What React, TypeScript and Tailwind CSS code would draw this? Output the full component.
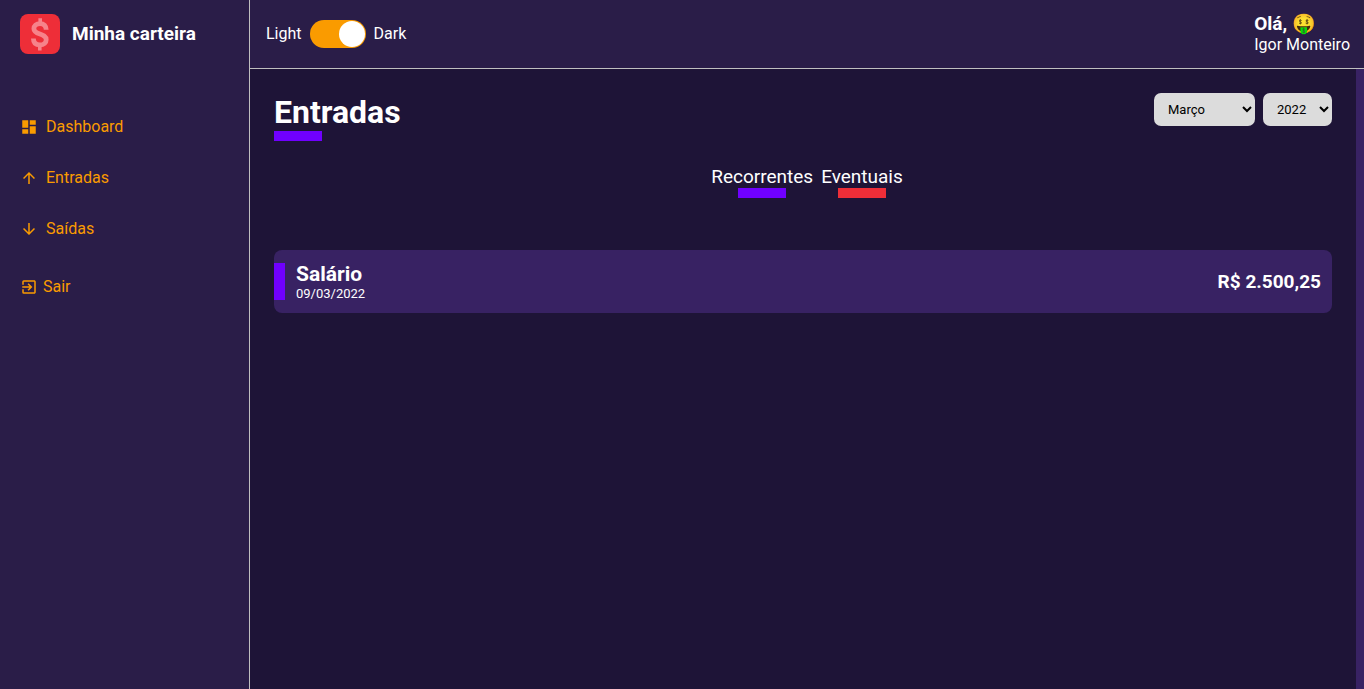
import { useState } from "react";
import { MdArrowDownward, MdArrowUpward, MdDashboard, MdExitToApp } from "react-icons/md";

const months = [
  "Janeiro", "Fevereiro", "Março", "Abril", "Maio", "Junho",
  "Julho", "Agosto", "Setembro", "Outubro", "Novembro", "Dezembro",
];

const links = [
  { label: "Dashboard", Icon: MdDashboard },
  { label: "Entradas", Icon: MdArrowUpward },
  { label: "Saídas", Icon: MdArrowDownward },
];

const entries = [{ title: "Salário", date: "09/03/2022", amount: "R$ 2.500,25" }];

function Logo() {
  return (
    <svg viewBox="0 0 40 40" className="size-10" aria-hidden="true">
      <rect width="40" height="40" rx="8" fill="#ee2e38" />
      <g fill="none" stroke="#f6838a">
        <path d="M20.200 4.200V8M19.800 32.500V36.500" strokeWidth="3.600" />
        <path
          d="M26.200 15.800C26.200 11.800 23.800 9.600 20.100 9.600C16.200 9.600 13.900 11.700 13.900 14.700C13.900 21.400 26.200 18.600 26.200 25.700C26.200 28.900 23.800 30.900 20 30.900C15.900 30.900 13.400 28.800 13.400 24.400"
          strokeWidth="4.800"
        />
      </g>
    </svg>
  );
}

function Sidebar() {
  return (
    <aside className="flex w-[250px] shrink-0 flex-col border-r border-[#bfbfbf] bg-[#2a1d48] pl-5">
      <div className="flex h-[68px] items-center gap-3">
        <Logo />
        <h3 className="text-[19px] font-bold text-white">Minha carteira</h3>
      </div>
      <nav className="mt-[47px] flex flex-col items-start gap-[27px] text-[#fa9b00]">
        {links.map(({ label, Icon }) => (
          <a key={label} href="#" className="flex items-center gap-2 leading-6">
            <Icon className="size-[18px]" />
            {label}
          </a>
        ))}
      </nav>
      <button type="button" className="mt-[34px] flex items-center gap-[5px] self-start leading-6 text-[#fa9b00]">
        <MdExitToApp className="size-[18px]" />
        Sair
      </button>
    </aside>
  );
}

function Header() {
  const [dark, setDark] = useState(true);
  return (
    <header className="flex h-[69px] items-center justify-between border-b border-[#bfbfbf] bg-[#2a1d48] pr-[14px] pl-4">
      <label className="flex items-center gap-2">
        <span>Light</span>
        <input
          type="checkbox"
          role="switch"
          aria-label="Tema escuro"
          checked={dark}
          onChange={(e) => setDark(e.target.checked)}
          className="flex h-7 w-14 appearance-none items-center rounded-full bg-[#fa9b00] px-px before:size-[26px] before:rounded-full before:bg-white checked:justify-end"
        />
        <span>Dark</span>
      </label>
      <div className="leading-[21px]">
        <h3 className="text-[19px] leading-[21px] font-bold">Olá, 🤑</h3>
        <p>Igor Monteiro</p>
      </div>
    </header>
  );
}

export default function App() {
  const [month, setMonth] = useState("Março");
  const [year, setYear] = useState("2022");
  const select = "h-[33px] rounded-[7px] bg-[#dcdcdc] pl-[10px] text-[13px] text-black";
  return (
    <div className="flex min-h-screen font-[Roboto,sans-serif] text-base text-white">
      <Sidebar />
      <div className="flex min-w-0 flex-1 flex-col">
        <Header />
        <main className="flex-1 border-r-8 border-[#382263] bg-[#1e1437] p-6">
          <div className="flex items-start justify-between">
            <h1 className="text-[32px] leading-[38px] font-bold after:block after:h-[10px] after:w-12 after:bg-[#7000ff]">
              Entradas
            </h1>
            <div className="flex gap-2">
              <select aria-label="Mês" value={month} onChange={(e) => setMonth(e.target.value)} className={`${select} w-[101px]`}>
                {months.map((m) => <option key={m}>{m}</option>)}
              </select>
              <select aria-label="Ano" value={year} onChange={(e) => setYear(e.target.value)} className={`${select} w-[69px]`}>
                {["2022", "2021", "2020"].map((y) => <option key={y}>{y}</option>)}
              </select>
            </div>
          </div>
          <div className="mt-6 flex justify-center gap-2 pl-2 text-[19px] leading-[23px]">
            <button type="button" className="after:mx-auto after:block after:h-[10px] after:w-12 after:bg-[#7000ff]">
              Recorrentes
            </button>
            <button type="button" className="after:mx-auto after:block after:h-[10px] after:w-12 after:bg-[#ee2e38]">
              Eventuais
            </button>
          </div>
          <ul className="mt-[52px]">
            {entries.map((e) => (
              <li key={e.title} className="flex items-center justify-between rounded-lg bg-[#382263] py-3 pr-[11px]">
                <div className="flex items-center gap-[11px]">
                  <span className="h-[37px] w-[11px] bg-[#7000ff]" />
                  <div>
                    <h2 className="text-[21px] leading-6 font-bold">{e.title}</h2>
                    <p className="text-[13px] leading-[15px]">{e.date}</p>
                  </div>
                </div>
                <h3 className="text-[19px] leading-6 font-bold">{e.amount}</h3>
              </li>
            ))}
          </ul>
        </main>
      </div>
    </div>
  );
}
